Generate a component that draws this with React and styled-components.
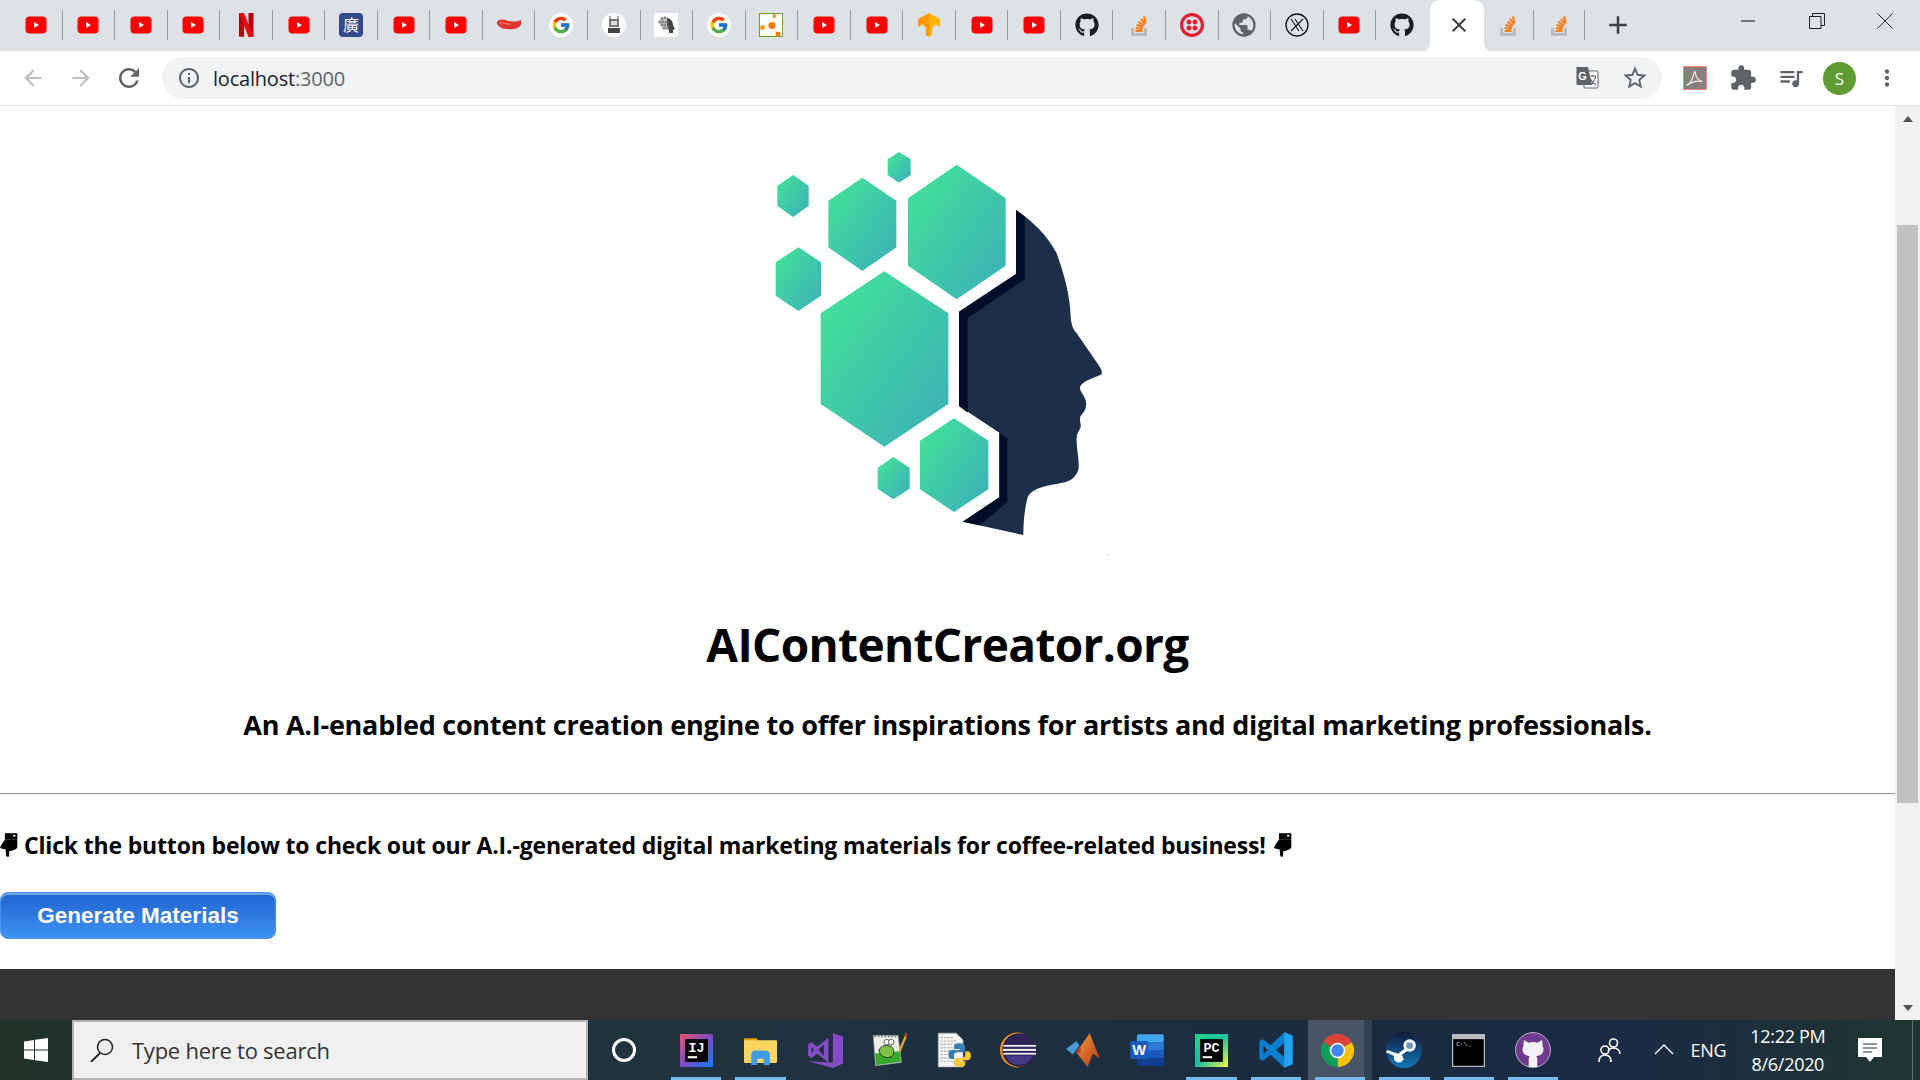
import React from 'react';
import styled, { createGlobalStyle, css } from 'styled-components';
import {
  MdAdd, MdArrowBack, MdArrowForward, MdClose, MdExtension, MdInfoOutline,
  MdMoreVert, MdPublic, MdQueueMusic, MdRefresh, MdStarBorder,
} from 'react-icons/md';
import { FaGithub } from 'react-icons/fa';
import { FcGoogle } from 'react-icons/fc';
import { SiTwilio } from 'react-icons/si';

const GlobalStyle = createGlobalStyle`
  html, body {
    margin: 0;
    height: 100%;
    overflow: hidden;
    background: #fff;
    font-family: "Open Sans", "Liberation Sans", sans-serif;
  }
  #root { height: 100%; }
`;

const Window = styled.div`
  height: 1080px;
  display: flex;
  flex-direction: column;
`;

/* ---------- tab strip ---------- */

const TabStrip = styled.div`
  height: 51px;
  flex: none;
  display: flex;
  padding-left: 10px;
  background: #dee1e6;
`;

const Tab = styled.div`
  flex: none;
  box-sizing: border-box;
  width: ${(p) => p.$width || 52.55}px;
  height: 30px;
  margin-top: 10px;
  display: flex;
  align-items: center;
  justify-content: center;
  ${(p) => !p.$plain && css`border-right: 1.5px solid #9b9da1;`}
`;

const ActiveTab = styled.div`
  flex: none;
  position: relative;
  width: 54px;
  margin-left: 1px;
  padding: 13px 0 0 4px;
  box-sizing: border-box;
  border-radius: 10px 10px 0 0;
  background: #fff;
  color: #3c4043;
  display: flex;
  align-items: flex-start;
  justify-content: center;

  &::before, &::after {
    content: '';
    position: absolute;
    bottom: 0;
    width: 8px;
    height: 8px;
  }
  &::before {
    left: -8px;
    background: radial-gradient(circle at 0 0, transparent 8px, #fff 8.5px);
  }
  &::after {
    right: -8px;
    background: radial-gradient(circle at 100% 0, transparent 8px, #fff 8.5px);
  }
`;

const NewTab = styled.div`
  flex: none;
  width: 66px;
  height: 30px;
  margin-top: 10px;
  display: flex;
  align-items: center;
  justify-content: center;
  color: #3c4043;
`;

const WindowControls = styled.div`
  margin-left: auto;
  display: flex;
  height: 42px;
  padding-right: 1px;
`;

const WindowButton = styled.div`
  width: 68.3px;
  display: flex;
  align-items: center;
  justify-content: center;
`;

/* ---------- toolbar ---------- */

const Toolbar = styled.div`
  height: 55px;
  flex: none;
  box-sizing: border-box;
  display: flex;
  align-items: center;
  padding: 0 9px 0 8.6px;
  background: #fff;
  border-bottom: 1px solid #e0e0e0;
`;

const NavButton = styled.div`
  flex: none;
  width: 48px;
  height: 48px;
  display: flex;
  align-items: center;
  justify-content: center;
  color: ${(p) => (p.$muted ? '#bdc1c6' : '#5f6368')};
`;

const Omnibox = styled.div`
  flex: none;
  width: 1500px;
  height: 42px;
  margin: 0 9.4px;
  border-radius: 21px;
  background: #f1f3f4;
  display: flex;
  align-items: center;
  padding-left: 15px;
  box-sizing: border-box;
  color: #5f6368;
`;

const Url = styled.div`
  margin-left: 12px;
  font-size: 20px;
  letter-spacing: -0.2px;
  color: #5f6368;

  b {
    font-weight: 400;
    color: #202124;
  }
`;

const OmniActions = styled.div`
  margin-left: auto;
  display: flex;
  padding-right: 2.6px;
`;

/* ---------- page ---------- */

const Viewport = styled.div`
  flex: 1;
  min-height: 0;
  display: flex;
`;

const Page = styled.main`
  flex: 1;
  min-width: 0;
  display: flex;
  flex-direction: column;
  background: #fff;
`;

const Logo = styled.svg`
  display: block;
  flex: none;
  width: 400px;
  height: 430px;
  margin: 24px 0 0 740px;
`;

const Title = styled.h1`
  margin: 52px 0 0;
  font-size: 46px;
  line-height: 64px;
  font-weight: 700;
  text-align: center;
  letter-spacing: -0.65px;
  color: #000;
`;

const Tagline = styled.h3`
  margin: 30px 0 0;
  font-size: 27px;
  line-height: 38px;
  font-weight: 700;
  text-align: center;
  letter-spacing: -0.25px;
  color: #000;
`;

const Rule = styled.hr`
  flex: none;
  height: 0;
  margin: 49px 0 0;
  border: 0;
  border-top: 1px solid #9a9a9a;
  border-bottom: 1px solid #eee;
`;

const Prompt = styled.p`
  margin: 34px 0 0;
  display: flex;
  align-items: center;
  font-size: 23px;
  line-height: 32px;
  font-weight: 700;
  letter-spacing: -0.17px;
  color: #000;
`;

const PromptText = styled.span`
  margin: 0 8px 0 6px;
`;

const GenerateButton = styled.button`
  flex: none;
  align-self: flex-start;
  width: 276px;
  height: 47px;
  margin: 31px 0 0;
  padding: 0;
  box-sizing: border-box;
  border: 1px solid #4b93ee;
  border-radius: 8px;
  box-shadow: inset 0 2px 0 #6ea6ec;
  background: linear-gradient(#1f62cf, #3f92f4);
  color: #fff;
  font-family: "Liberation Sans", Arial, sans-serif;
  font-size: 22.5px;
  font-weight: 700;
`;

const Footer = styled.footer`
  flex: 1;
  margin-top: 30px;
  background: #333;
`;

const Scrollbar = styled.div`
  flex: none;
  width: 25px;
  box-sizing: border-box;
  padding: 0 2px 0 2px;
  background: #f1f1f1;
  display: flex;
  flex-direction: column;
  align-items: stretch;
`;

const ScrollArrow = styled.div`
  flex: none;
  align-self: center;
  width: 0;
  height: 0;
  border-left: 5.5px solid transparent;
  border-right: 5.5px solid transparent;
  ${(p) => (p.$down
    ? css`border-top: 6px solid #505050; margin-top: auto; margin-bottom: 9px;`
    : css`border-bottom: 6px solid #505050; margin-top: 10px;`)}
`;

const ScrollThumb = styled.div`
  flex: none;
  height: 578px;
  margin-top: 103px;
  background: #c1c1c1;
`;

/* ---------- taskbar ---------- */

const Taskbar = styled.div`
  height: 60px;
  flex: none;
  display: flex;
  color: #fff;
  background: linear-gradient(90deg, #1f3329 0%, #20343d 30%, #1b2b40 70%, #1a2a44 85%, #1f3530 100%);
`;

const StartButton = styled.div`
  flex: none;
  width: 72px;
  display: flex;
  align-items: center;
  justify-content: center;
`;

const SearchBox = styled.div`
  flex: none;
  width: 516px;
  box-sizing: border-box;
  display: flex;
  align-items: center;
  padding-left: 16px;
  background: #f0f0f0;
  border: 2px solid #b4b4b4;
  border-bottom-width: 2px;
  color: #333;
`;

const SearchText = styled.span`
  margin-left: 18px;
  font-size: 22px;
  letter-spacing: -0.25px;
`;

const CortanaSlot = styled.div`
  flex: none;
  width: 76px;
  padding-right: 5px;
  box-sizing: border-box;
  display: flex;
  align-items: center;
  justify-content: center;
`;

const CortanaRing = styled.div`
  width: 18px;
  height: 18px;
  border: 3px solid #fff;
  border-radius: 50%;
`;

const TaskSlot = styled.div`
  flex: none;
  position: relative;
  box-sizing: border-box;
  width: 64.4px;
  display: flex;
  align-items: center;
  justify-content: center;

  ${(p) => p.$focused && css`
    padding-right: 6px;
    background: linear-gradient(90deg, rgba(255,255,255,0.2) 88%, rgba(255,255,255,0.1) 88%);
  `}

  ${(p) => p.$running && css`
    &::after {
      content: '';
      position: absolute;
      left: 7px;
      right: 7px;
      bottom: 0;
      height: 3px;
      background: #76b9ed;
    }
  `}
`;

const TraySlot = styled.div`
  flex: none;
  width: ${(p) => p.$width}px;
  display: flex;
  align-items: center;
  justify-content: center;
  font-size: 18px;
  letter-spacing: -0.3px;
`;

const Clock = styled.div`
  text-align: center;
  line-height: 28px;
  font-size: 18px;
  letter-spacing: -0.3px;
`;

const Tray = styled.div`
  display: flex;
  padding-left: 12.4px;
`;

const ShowDesktop = styled.div`
  flex: none;
  width: 1px;
  margin-left: 17px;
  background: #5c6a6c;
`;

/* ---------- icons ---------- */

const Svg = styled.svg`
  display: block;
  flex: none;
  width: ${(p) => p.$size || 24}px;
  height: ${(p) => p.$size || 24}px;
`;

const HandSvg = styled.svg`
  display: block;
  flex: none;
  width: 18px;
  height: 24px;
`;

const YouTube = () => (
  <Svg viewBox="0 0 24 24">
    <rect x="1.5" y="3.5" width="21" height="17" rx="4" fill="#f00" />
    <path d="M10 9l5 3-5 3z" fill="#fff" />
  </Svg>
);

const Netflix = () => (
  <Svg viewBox="0 0 24 24">
    <path d="M5 0h5v24l-5-.6z" fill="#b1060f" />
    <path d="M14.500 0h5v23.400l-5 .6z" fill="#b1060f" />
    <path d="M5 0h5l9.500 23.400-5 .6z" fill="#e50914" />
  </Svg>
);

const Kanji = () => (
  <Svg viewBox="0 0 24 24">
    <rect width="24" height="24" rx="4" fill="#35488a" />
    <text x="12" y="18" textAnchor="middle" fontSize="16" fill="#fff" fontFamily='"Noto Sans CJK TC", sans-serif'>廣</text>
  </Svg>
);

const Ribbon = () => (
  <Svg viewBox="0 0 24 24">
    <path d="M0 9c2-3 6-3 10-1.500 5 2 10 1 14-.5v5c-3 4-8 5-13 4-5 0-8-1-11-5z" fill="#e0342c" />
    <path d="M2 10c4-1 8 2 12 1" stroke="#f78f88" fill="none" />
  </Svg>
);

const Robot = () => (
  <Svg viewBox="0 0 24 24">
    <circle cx="12" cy="12" r="12" fill="#fff" />
    <path d="M8 3v3M16 3v3" stroke="#555" />
    <rect x="7" y="6" width="10" height="8" fill="#777" />
    <rect x="9" y="8" width="6" height="4" fill="#ddd" />
    <rect x="6" y="15" width="12" height="5" fill="#444" />
  </Svg>
);

const BrainHead = () => (
  <Svg viewBox="0 0 24 24">
    <rect width="24" height="24" fill="#fff" />
    <path d="M13 5c3 0 6 3 6 7l2 4-2 1v3h-4v-2l-2-6z" fill="#444" />
    {[[8, 6], [11, 5], [6, 9], [9, 9], [12, 9], [8, 12], [11, 12], [10, 15], [13, 15]].map(([x, y]) => (
      <circle key={`${x}-${y}`} cx={x} cy={y} r="1.700" fill="#8a8a8a" />
    ))}
  </Svg>
);

const Analytics = () => (
  <Svg viewBox="0 0 24 24">
    <rect x="0.500" y="0.500" width="23" height="23" fill="#fff" stroke="#6aa329" />
    <path d="M3 14l10-2 5 9M13 12l3-9" fill="none" stroke="#f8d8b0" />
    <circle cx="13" cy="12.500" r="3.500" fill="#f57c00" />
    <circle cx="3.500" cy="14.500" r="2.500" fill="#f89c2c" />
    <circle cx="19" cy="21" r="2.500" fill="#f57c00" />
    <circle cx="15.500" cy="3" r="2" fill="#f89c2c" />
  </Svg>
);

const TensorFlow = () => (
  <Svg viewBox="0 0 24 24">
    <path d="M12 0L1 6v8l5.500-3.200V13L9 14.500V22l3 2z" fill="#ff9800" />
    <path d="M12 0l11 6v8l-5.500-3.200V13L15 14.500V22l-3 2z" fill="#ffb300" />
  </Svg>
);

const StackOverflow = () => (
  <Svg viewBox="0 0 24 24">
    <path d="M5.500 15v6.500h13V15" fill="none" stroke="#bcbbbb" strokeWidth="3" />
    <path d="M8.500 18h7M8.800 15l6.800 1.400M9.700 11.800l6.300 2.900M11.500 8.700l5.300 4.500M14 5.800l4 5.600M17 3.200l1.500 6.800" fill="none" stroke="#f48024" strokeWidth="2.200" />
  </Svg>
);

const CircledX = () => (
  <Svg viewBox="0 0 24 24">
    <circle cx="12" cy="12" r="11" fill="none" stroke="#111" strokeWidth="1.300" />
    <path d="M6 6l8 12M10 6l8 12M18 6L6 18" fill="none" stroke="#111" strokeWidth="1.100" />
  </Svg>
);

function GoogleBadge() {
  return (
    <Svg viewBox="0 0 24 24">
      <circle cx="12" cy="12" r="12" fill="#fff" />
      <foreignObject x="2" y="2" width="20" height="20">
        <FcGoogle size={20} />
      </foreignObject>
    </Svg>
  );
}

const tabIcons = {
  yt: <YouTube />,
  netflix: <Netflix />,
  kanji: <Kanji />,
  ribbon: <Ribbon />,
  google: <GoogleBadge />,
  robot: <Robot />,
  brain: <BrainHead />,
  analytics: <Analytics />,
  tf: <TensorFlow />,
  github: <FaGithub size={24} color="#1b1f23" />,
  so: <StackOverflow />,
  twilio: <SiTwilio size={24} color="#e31e2d" />,
  globe: <MdPublic size={28} color="#5f6368" />,
  x: <CircledX />,
};

const tabsBefore = [
  'yt', 'yt', 'yt', 'yt', 'netflix', 'yt', 'kanji', 'yt', 'yt', 'ribbon', 'google', 'robot', 'brain', 'google',
  'analytics', 'yt', 'yt', 'tf', 'yt', 'yt', 'github', 'so', 'twilio', 'globe', 'x', 'yt', 'github',
];

const Translate = () => (
  <Svg viewBox="0 0 24 24">
    <rect x="9" y="5" width="14" height="17" rx="1" fill="#fff" stroke="#5f6368" />
    <path d="M1.500 1h11.500l4 18H3a1.500 1.500 0 0 1-1.500-1.500z" fill="#5f6368" />
    <path d="M14 10h7M17.500 9v1.500M15 19c3-2 5-5 5.500-8.500M15.500 13c1 2.500 3 4.500 5.500 6" stroke="#5f6368" strokeWidth="1.100" fill="none" />
    <text x="7.500" y="13.500" textAnchor="middle" fontSize="11" fontWeight="700" fill="#fff" fontFamily='"Liberation Sans", sans-serif'>G</text>
  </Svg>
);

const PdfBadge = () => (
  <Svg viewBox="0 0 24 24">
    <rect x="0.500" y="0.500" width="23" height="23" fill="#8b7e7e" stroke="#f08c7c" />
    <path d="M4 19c3-1 6-6 7-12 .3-2 1.500-2 1.500 0 0 4 3 8 7 8.500-3-.5-9 0-12.500 2-1.500 1-2.500 2-3 1.500z" fill="none" stroke="#f1eaea" strokeWidth="1.200" />
  </Svg>
);

const Avatar = styled.div`
  width: 33px;
  height: 33px;
  border-radius: 50%;
  background: #5f9a32;
  color: #fff;
  font-size: 17px;
  display: flex;
  align-items: center;
  justify-content: center;
`;

const IdeBadge = ({ label, colors }) => (
  <Svg $size={33} viewBox="0 0 32 32">
    <defs>
      <linearGradient id={`ide-${label}`} x1="0" y1="0" x2="1" y2="1">
        <stop offset="0" stopColor={colors[0]} />
        <stop offset="0.500" stopColor={colors[1]} />
        <stop offset="1" stopColor={colors[2]} />
      </linearGradient>
    </defs>
    <rect width="32" height="32" fill={`url(#ide-${label})`} />
    <rect x="5" y="5" width="22" height="22" fill="#000" />
    <text x="16" y="17.500" textAnchor="middle" fontSize="13" fontWeight="700" fill="#fff" fontFamily='"Liberation Mono", monospace'>{label}</text>
    <rect x="7.500" y="21.500" width="9" height="2" fill="#fff" />
  </Svg>
);

const ExplorerIcon = () => (
  <Svg $size={33} viewBox="0 0 32 32">
    <path d="M0 4h12l3 3H0z" fill="#e0a200" />
    <rect y="6" width="32" height="22" rx="1" fill="#fbd562" />
    <path d="M7 30V20a4 4 0 0 1 4-4h10a4 4 0 0 1 4 4v10h-6v-6h-6v6z" fill="#3f9de0" />
  </Svg>
);

const VisualStudio = () => (
  <Svg $size={36} viewBox="0 0 32 32">
    <path d="M23 1l9 3v24l-9 4L1 26l22 1z" fill="#854cc7" />
    <path fillRule="evenodd" d="M1 11l3-2 5 4 10-8v22l-10-8-5 4-3-2zM4 13.500v5L6.500 16zM15 11l-5 5 5 5z" fill="#854cc7" />
  </Svg>
);

const NotepadPP = () => (
  <Svg $size={36} viewBox="0 0 32 32">
    <path d="M2 3h22l3 24-23 3z" fill="#eef1e8" stroke="#999" strokeWidth="0.600" />
    <path d="M3 4h20" stroke="#777" strokeWidth="1.500" strokeDasharray="1.500 1.500" />
    <path d="M3.500 19l22-2 1 9.500-22 3z" fill="#39a82e" />
    <path d="M7 16c2-4 7-5 11-3 3 2 3 7 0 9-4 2-10 0-11-6z" fill="#7fc241" stroke="#222" strokeWidth="0.800" />
    <circle cx="14" cy="9" r="2.500" fill="#fff" stroke="#222" strokeWidth="0.600" />
    <circle cx="18" cy="9" r="2.500" fill="#fff" stroke="#222" strokeWidth="0.600" />
    <path d="M32 1l-7 17" stroke="#e6a92c" strokeWidth="2" />
    <path d="M32 1l-1.500 3" stroke="#b33" strokeWidth="2" />
  </Svg>
);

const PythonFile = () => (
  <Svg $size={36} viewBox="0 0 32 32">
    <path d="M2 1h16l6 6v24H2z" fill="#f5f5f5" stroke="#aaa" strokeWidth="0.600" />
    <path d="M4 5h12M4 8h14M4 11h10M4 14h14M4 17h9M4 20h12M4 23h9M4 26h13" stroke="#aaa" strokeDasharray="2 1" />
    <path d="M21 10c-4 0-5 1-5 3v2h5v1h-7c-2 0-3 1.500-3 4s1 4 3 4h2v-3c0-2 1-3 3-3h5c1.500 0 2-1 2-2v-3c0-2-2-3-5-3z" fill="#3a7cb0" />
    <path d="M21 31c4 0 5-1 5-3v-2h-5v-1h7c2 0 3-1.500 3-4s-1-4-3-4h-2v3c0 2-1 3-3 3h-5c-1.500 0-2 1-2 2v3c0 2 2 3 5 3z" fill="#fcc83a" />
  </Svg>
);

const Eclipse = () => (
  <Svg $size={36} viewBox="0 0 32 32">
    <circle cx="15.500" cy="16" r="15.500" fill="#f7941e" />
    <circle cx="17" cy="16" r="15" fill="#2c2255" />
    <rect x="3" y="11.500" width="29" height="1.600" fill="#f2f0f7" />
    <rect x="2.500" y="15" width="30" height="1.800" fill="#f2f0f7" />
    <rect x="3" y="18.500" width="29" height="1.600" fill="#f2f0f7" />
    <path d="M5 21h24a13 13 0 0 1-24 0z" fill="#463a86" />
  </Svg>
);

const Matlab = () => (
  <Svg $size={36} viewBox="0 0 32 32">
    <defs>
      <linearGradient id="matlab-peak" x1="0" y1="0" x2="1" y2="1">
        <stop offset="0" stopColor="#f2a13a" />
        <stop offset="1" stopColor="#b5301b" />
      </linearGradient>
    </defs>
    <path d="M1 15l9-7 3 4-6 8z" fill="#4a9ad4" />
    <path d="M10 18L22 1l9 23-6-5-5 12z" fill="url(#matlab-peak)" />
    <path d="M14 13c-3 2-4 5-4 7l4-2z" fill="#c63d2b" />
  </Svg>
);

const Word = () => (
  <Svg $size={36} viewBox="0 0 32 32">
    <rect x="7" y="2" width="24" height="7" rx="1.500" fill="#41a5ee" />
    <rect x="7" y="9" width="24" height="7" fill="#2b7cd3" />
    <rect x="7" y="16" width="24" height="7" fill="#185abd" />
    <rect x="7" y="23" width="24" height="7" rx="1.500" fill="#103f91" />
    <rect x="1" y="8" width="16" height="16" rx="1.500" fill="#185abd" />
    <text x="9" y="20.500" textAnchor="middle" fontSize="13" fontWeight="700" fill="#fff" fontFamily='"Liberation Sans", sans-serif'>W</text>
  </Svg>
);

const VSCode = () => (
  <Svg $size={38} viewBox="0 0 32 32">
    <path fillRule="evenodd" d="M23 1L11.500 12 5 7 2 8.500v15L5 25l6.500-5L23 31l7-3V4zM23 10l-7 6 7 6zM5.500 12.500v7L9 16z" fill="#0b7fd0" />
    <path d="M23 1l7 3v24l-7 3z" fill="#23a3ee" />
  </Svg>
);

const Chrome = () => (
  <Svg $size={33} viewBox="0 0 32 32">
    <path d="M16 16L2.140 8A16 16 0 0 1 29.860 8z" fill="#db4437" />
    <path d="M16 16L29.860 8A16 16 0 0 1 16 32z" fill="#f4c20d" />
    <path d="M16 16L16 32A16 16 0 0 1 2.140 8z" fill="#0f9d58" />
    <circle cx="16" cy="16" r="7.500" fill="#fff" />
    <circle cx="16" cy="16" r="6" fill="#4285f4" />
  </Svg>
);

const Steam = () => (
  <Svg $size={36} viewBox="0 0 32 32">
    <defs>
      <linearGradient id="steam-bg" x1="0" y1="0" x2="0" y2="1">
        <stop offset="0" stopColor="#0f1b3d" />
        <stop offset="1" stopColor="#1478b4" />
      </linearGradient>
    </defs>
    <circle cx="16" cy="16" r="16" fill="url(#steam-bg)" />
    <path d="M0 18l9 4 4 5 3-3-6-5-9-3z" fill="#fff" />
    <circle cx="11" cy="23" r="4" fill="#fff" />
    <path d="M12 20l7-5" stroke="#fff" strokeWidth="3" />
    <circle cx="21" cy="12" r="5.500" fill="#fff" />
    <circle cx="21" cy="12" r="3" fill="#6d93b5" />
  </Svg>
);

const Cmd = () => (
  <Svg $size={33} viewBox="0 0 32 32">
    <rect width="32" height="32" fill="#b9bcbf" />
    <rect x="1.200" y="5" width="29.600" height="25.800" fill="#000" />
    <text x="4" y="12" fontSize="6" fill="#ddd" fontFamily='"Liberation Mono", monospace'>C:\_</text>
  </Svg>
);

const GithubDesktop = () => (
  <Svg $size={36} viewBox="0 0 32 32">
    <circle cx="16" cy="16" r="15.500" fill="#6f3a8f" stroke="#c8c2d0" strokeWidth="0.800" />
    <path d="M8 7l4 2.500c2.500-.7 5.500-.7 8 0L24 7c.6 2 .6 4 .3 5 1 1.500 1 3 1 4 0 4-4 5-6.500 5.500.6.700 1 1.500 1 3V31h-7.600v-6.500c0-1.500.4-2.300 1-3C10.700 21 6.700 20 6.700 16c0-1 0-2.500 1-4-.3-1-.3-3 .3-5z" fill="#f4f1f6" />
  </Svg>
);

const taskIcons = [
  { icon: <IdeBadge label="IJ" colors={['#f0516f', '#7b4bc0', '#0d7bf2']} />, running: true },
  { icon: <ExplorerIcon />, running: true },
  { icon: <VisualStudio /> },
  { icon: <NotepadPP /> },
  { icon: <PythonFile /> },
  { icon: <Eclipse /> },
  { icon: <Matlab /> },
  { icon: <Word /> },
  { icon: <IdeBadge label="PC" colors={['#21d789', '#1dbfa0', '#fcf84a']} />, running: true },
  { icon: <VSCode />, running: true },
  { icon: <Chrome />, running: true, focused: true },
  { icon: <Steam />, running: true },
  { icon: <Cmd />, running: true },
  { icon: <GithubDesktop />, running: true },
];

const hexagons = [
  '433,424 625,550 625,822 433,950 242,822 242,550',
  '650,104 797,205 797,407 650,508 504,407 504,205',
  '367,143 469,212 469,352 367,423 265,352 265,212',
  '477,66 512,88 512,135 477,158 443,135 443,88',
  '159,135 206,167 206,228 159,261 112,228 112,167',
  '175,352 243,397 243,497 175,543 107,497 107,397',
  '642,865 745,932 745,1078 642,1146 540,1078 540,932',
  '460,981 509,1013 509,1076 460,1108 413,1076 413,1013',
];

const BrandLogo = () => (
  <Logo viewBox="0 0 1200 1290">
    <defs>
      <linearGradient id="hex-fill" x1="0.150" y1="0.150" x2="0.900" y2="0.900">
        <stop offset="0" stopColor="#42dd9b" />
        <stop offset="1" stopColor="#3cb3b6" />
      </linearGradient>
    </defs>
    {hexagons.map((points) => (
      <polygon key={points} points={points} fill="url(#hex-fill)" />
    ))}
    <path
      d="M828 240V432L657 545V828L778 908V1102L668 1175L850 1215C850 1180 852 1150 862 1105C872 1080 900 1070 960 1060C990 1055 1005 1045 1015 1020C1020 1000 1008 950 1010 920C1012 905 1025 895 1022 885C1020 870 1018 862 1024 855C1036 845 1040 830 1038 815C1034 795 1018 785 1020 770C1030 752 1060 745 1085 733C1088 722 1080 712 1072 700L1010 610C1000 598 995 590 992 560C990 500 975 440 950 370C925 320 880 275 828 240Z"
      fill="#1c2e4a"
    />
    <path d="M828 240L855 260V447L683 565V848L657 828V545L828 432Z" fill="#020d28" />
    <path d="M778 908L802 924V1115L720 1186L668 1175L778 1102Z" fill="#020d28" />
    <circle cx="1104" cy="1275" r="2" fill="#c8c8c8" />
  </Logo>
);

const PointingHand = () => (
  <HandSvg viewBox="0 0 55 72">
    <path d="M15 0h38v20H15z" fill="#000" />
    <rect x="40" y="5" width="7" height="5" fill="#fff" />
    <path d="M15 20h38v20c0 8-8 12-20 14l-5 1v14c0 4-8 4-9 0l-2-20c-4 0-10-1-17-4 2-8 10-17 15-25z" fill="#000" />
  </HandSvg>
);

export default function App() {
  return (
    <Window>
      <GlobalStyle />
      <TabStrip>
        {tabsBefore.map((name, i) => (
          <Tab key={i} $plain={i === tabsBefore.length - 1}>{tabIcons[name]}</Tab>
        ))}
        <ActiveTab><MdClose size={24} /></ActiveTab>
        <Tab $width={50}><StackOverflow /></Tab>
        <Tab $width={51}><StackOverflow /></Tab>
        <NewTab><MdAdd size={30} /></NewTab>
        <WindowControls>
          <WindowButton>
            <Svg $size={16} viewBox="0 0 16 16"><path d="M1 8h14" stroke="#111" /></Svg>
          </WindowButton>
          <WindowButton>
            <Svg $size={16} viewBox="0 0 16 16">
              <path d="M.5 3.500h11.500v12H.5zM3.500 3.500V.5h12v12H12" fill="none" stroke="#222" />
            </Svg>
          </WindowButton>
          <WindowButton>
            <Svg $size={16} viewBox="0 0 16 16"><path d="M.5.5l15 15M15.500.5l-15 15" stroke="#222" /></Svg>
          </WindowButton>
        </WindowControls>
      </TabStrip>

      <Toolbar>
        <NavButton $muted><MdArrowBack size={26} /></NavButton>
        <NavButton $muted><MdArrowForward size={26} /></NavButton>
        <NavButton><MdRefresh size={30} /></NavButton>
        <Omnibox>
          <MdInfoOutline size={24} />
          <Url><b>localhost</b>:3000</Url>
          <OmniActions>
            <NavButton><Translate /></NavButton>
            <NavButton><MdStarBorder size={28} /></NavButton>
          </OmniActions>
        </Omnibox>
        <NavButton><PdfBadge /></NavButton>
        <NavButton><MdExtension size={28} /></NavButton>
        <NavButton><MdQueueMusic size={28} /></NavButton>
        <NavButton><Avatar>S</Avatar></NavButton>
        <NavButton><MdMoreVert size={26} /></NavButton>
      </Toolbar>

      <Viewport>
        <Page>
          <BrandLogo />
          <Title>AIContentCreator.org</Title>
          <Tagline>An A.I-enabled content creation engine to offer inspirations for artists and digital marketing professionals.</Tagline>
          <Rule />
          <Prompt>
            <PointingHand />
            <PromptText>Click the button below to check out our A.I.-generated digital marketing materials for coffee-related business!</PromptText>
            <PointingHand />
          </Prompt>
          <GenerateButton>Generate Materials</GenerateButton>
          <Footer />
        </Page>
        <Scrollbar>
          <ScrollArrow />
          <ScrollThumb />
          <ScrollArrow $down />
        </Scrollbar>
      </Viewport>

      <Taskbar>
        <StartButton>
          <Svg viewBox="0 0 24 24">
            <path d="M0 3.500L10 2v9.500H0zM11 1.800L24 0v11.500H11zM0 12.500h10V22L0 20.500zM11 12.500h13V24l-13-1.800z" fill="#fff" />
          </Svg>
        </StartButton>
        <SearchBox>
          <Svg viewBox="0 0 24 24">
            <circle cx="15" cy="9" r="7.500" fill="none" stroke="#222" strokeWidth="1.500" />
            <path d="M10 15L1 24" stroke="#222" strokeWidth="1.800" />
          </Svg>
          <SearchText>Type here to search</SearchText>
        </SearchBox>
        <CortanaSlot><CortanaRing /></CortanaSlot>
        {taskIcons.map((item, i) => (
          <TaskSlot key={i} $running={item.running} $focused={item.focused}>{item.icon}</TaskSlot>
        ))}
        <Tray>
          <TraySlot $width={64}>
            <Svg $size={26} viewBox="0 0 26 26">
              <g fill="none" stroke="#fff" strokeWidth="1.600">
                <circle cx="16.500" cy="6" r="4" />
                <path d="M11 14c1-2.500 3-3 5.500-3 3 0 6 1.500 6.500 6" />
                <circle cx="8" cy="13" r="4" />
                <path d="M2 25c0-4 2-7 6-7s6 3 6 7" />
              </g>
            </Svg>
          </TraySlot>
          <TraySlot $width={44}>
            <Svg $size={20} viewBox="0 0 20 20"><path d="M1 14l9-9 9 9" fill="none" stroke="#fff" strokeWidth="1.400" /></Svg>
          </TraySlot>
          <TraySlot $width={45}>ENG</TraySlot>
          <TraySlot $width={114}>
            <Clock>12:22 PM<br />8/6/2020</Clock>
          </TraySlot>
          <TraySlot $width={50}>
            <Svg viewBox="0 0 24 24">
              <path d="M0 0h24v19h-8l-4 5-4-5H0z" fill="#fff" />
              <path d="M5 6h14M5 10h14M5 14h9" stroke="#1f2f3d" strokeWidth="1.200" />
            </Svg>
          </TraySlot>
          <ShowDesktop />
        </Tray>
      </Taskbar>
    </Window>
  );
}
